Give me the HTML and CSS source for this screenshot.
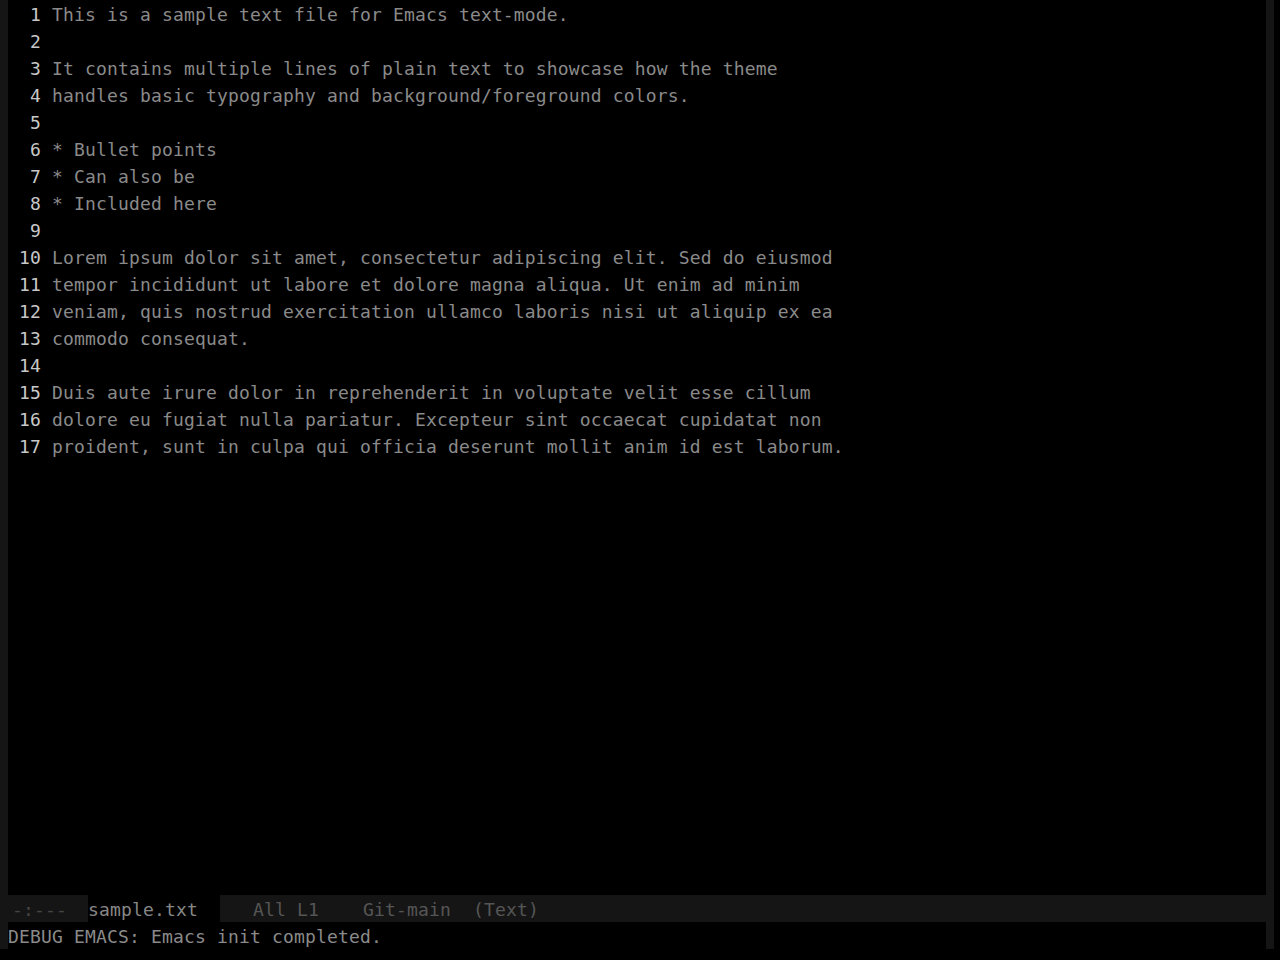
FILE: index.html
```html
<!DOCTYPE html>
<html lang="en">
 <head>
  <meta charset="utf-8">
  <title>sample.txt - Emacs</title>
  <link rel="stylesheet" href="styles.css">
 </head>
 <body>
  <div class="frame">
   <div class="fringe"></div>
   <div class="main">
    <div class="buffer">
     <div class="line"><span class="num"> 1 </span>This is a sample text file for Emacs text-mode.</div>
     <div class="line"><span class="num"> 2 </span></div>
     <div class="line"><span class="num"> 3 </span>It contains multiple lines of plain text to showcase how the theme</div>
     <div class="line"><span class="num"> 4 </span>handles basic typography and background/foreground colors.</div>
     <div class="line"><span class="num"> 5 </span></div>
     <div class="line"><span class="num"> 6 </span>* Bullet points</div>
     <div class="line"><span class="num"> 7 </span>* Can also be</div>
     <div class="line"><span class="num"> 8 </span>* Included here</div>
     <div class="line"><span class="num"> 9 </span></div>
     <div class="line"><span class="num">10 </span>Lorem ipsum dolor sit amet, consectetur adipiscing elit. Sed do eiusmod</div>
     <div class="line"><span class="num">11 </span>tempor incididunt ut labore et dolore magna aliqua. Ut enim ad minim</div>
     <div class="line"><span class="num">12 </span>veniam, quis nostrud exercitation ullamco laboris nisi ut aliquip ex ea</div>
     <div class="line"><span class="num">13 </span>commodo consequat.</div>
     <div class="line"><span class="num">14 </span></div>
     <div class="line"><span class="num">15 </span>Duis aute irure dolor in reprehenderit in voluptate velit esse cillum</div>
     <div class="line"><span class="num">16 </span>dolore eu fugiat nulla pariatur. Excepteur sint occaecat cupidatat non</div>
     <div class="line"><span class="num">17 </span>proident, sunt in culpa qui officia deserunt mollit anim id est laborum.</div>
    </div>
    <div class="modeline">
     <span class="ml-status">-:---</span>
     <span class="ml-buffer">sample.txt</span>
     <span class="ml-rest">All L1    Git-main  (Text)</span>
    </div>
    <div class="echo">DEBUG EMACS: Emacs init completed.</div>
   </div>
   <div class="fringe"></div>
  </div>
 </body>
</html>
```

FILE: styles.css
```css
html, body {
  margin:0; background:#000;
}
body {
  font-family:"DejaVu Sans Mono", monospace;
  font-size:18px; letter-spacing:0.16px;
  color:#8a8a8a;
}
.frame {
  display:flex; width:1274px; height:949px;
}
.fringe {
  width:8px; background:#151515;
}
.main {
  flex:1; display:flex; flex-direction:column; min-width:0;
}
.buffer {
  flex:1; padding-left:11px;
}
.line, .modeline, .echo {
  box-sizing:border-box; height:27px; padding-top:1px;
  line-height:27px; white-space:pre;
}
.line {
  overflow:visible;
}
.num {
  color:#c8c8c8;
}
.modeline {
  display:flex; align-items:flex-start; padding-top:0;
  background:#151515; color:#555;
}
.modeline span {
  height:27px; padding-top:1px; box-sizing:border-box;
}
.ml-status {
  width:80px; padding-left:4px; color:#464646;
}
.ml-buffer {
  width:132px; background:#000; color:#878787;
}
.ml-rest {
  padding-left:33px;
}
.echo {
  background:#000;
}
```
